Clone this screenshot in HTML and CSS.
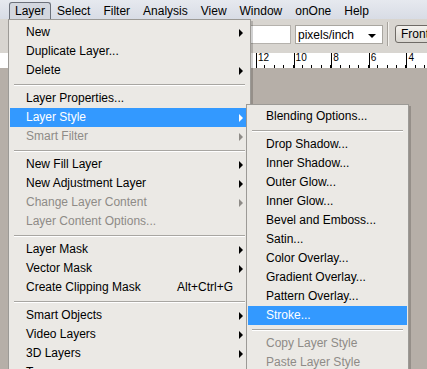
FILE: index.html
```html
<!DOCTYPE html>
<html>
<head>
<meta charset="utf-8">
<link rel="stylesheet" href="styles.css">
</head>
<body>
<div class="app">
  <div class="menubar">
    <span class="mi active">Layer</span>
    <span class="mi">Select</span>
    <span class="mi">Filter</span>
    <span class="mi">Analysis</span>
    <span class="mi">View</span>
    <span class="mi">Window</span>
    <span class="mi">onOne</span>
    <span class="mi">Help</span>
  </div>
  <div class="toolbar">
    <div class="field"></div>
    <div class="select">pixels/inch<span class="caret"></span></div>
    <div class="vsep"></div>
    <div class="btn">Front Image</div>
  </div>
  <div class="ruler">
    <span class="tick">12</span><span class="tick">10</span><span class="tick">8</span><span class="tick">6</span><span class="tick">4</span>
  </div>
  <div class="canvas"></div>

  <div class="menu">
    <div class="item sub">New</div>
    <div class="item">Duplicate Layer...</div>
    <div class="item sub">Delete</div>
    <div class="sep"></div>
    <div class="item">Layer Properties...</div>
    <div class="item sub hl">Layer Style</div>
    <div class="item sub dis">Smart Filter</div>
    <div class="sep"></div>
    <div class="item sub">New Fill Layer</div>
    <div class="item sub">New Adjustment Layer</div>
    <div class="item sub dis">Change Layer Content</div>
    <div class="item dis">Layer Content Options...</div>
    <div class="sep"></div>
    <div class="item sub">Layer Mask</div>
    <div class="item sub">Vector Mask</div>
    <div class="item"><span>Create Clipping Mask</span><span class="key">Alt+Ctrl+G</span></div>
    <div class="sep"></div>
    <div class="item sub">Smart Objects</div>
    <div class="item sub">Video Layers</div>
    <div class="item sub">3D Layers</div>
    <div class="item sub">Type</div>
  </div>

  <div class="submenu">
    <div class="item">Blending Options...</div>
    <div class="sep"></div>
    <div class="item">Drop Shadow...</div>
    <div class="item">Inner Shadow...</div>
    <div class="item">Outer Glow...</div>
    <div class="item">Inner Glow...</div>
    <div class="item">Bevel and Emboss...</div>
    <div class="item">Satin...</div>
    <div class="item">Color Overlay...</div>
    <div class="item">Gradient Overlay...</div>
    <div class="item">Pattern Overlay...</div>
    <div class="item hl">Stroke...</div>
    <div class="sep"></div>
    <div class="item dis">Copy Layer Style</div>
    <div class="item dis">Paste Layer Style</div>
  </div>
</div>
</body>
</html>
```

FILE: styles.css
```css
html, body {
  margin: 0;
  padding: 0;
  width: 427px;
  height: 369px;
  overflow: hidden;
}
body {
  font-family: "Liberation Sans", Arial, sans-serif;
  font-size: 12px;
  color: #000;
  background: #b6afa8;
}
.app {
  position: relative;
  width: 427px;
  height: 369px;
  overflow: hidden;
  display: flex;
  flex-direction: column;
}
.menubar {
  height: 19px;
  flex: none;
  display: flex;
  align-items: flex-end;
  padding-left: 9px;
  background: linear-gradient(#e6e9ef, #d8dce5);
  box-sizing: border-box;
}
.mi {
  font-size: 12px;
  padding: 0 5px;
  margin-right: 1px;
  line-height: 16px;
  height: 17px;
  border: 1px solid transparent;
  border-bottom: none;
  box-sizing: border-box;
  flex: none;
}
.mi.active {
  border-color: #6c717b;
  border-radius: 3px 3px 0 0;
  background: #d3d7df;
  margin-right: 0;
}
.toolbar {
  height: 34px;
  flex: none;
  background: #d8d5d0;
  display: flex;
  align-items: center;
  padding: 0 0 4px 8px;
  box-sizing: border-box;
}
.field {
  width: 281px;
  height: 17px;
  background: #fff;
  border: 1px solid #b5b2ad;
  margin-right: 4px;
  flex: none;
}
.select {
  width: 84px;
  height: 17px;
  background: #fff;
  border: 1px solid #a9a6a0;
  font-size: 12px;
  line-height: 18px;
  padding-left: 2px;
  position: relative;
  flex: none;
}
.caret {
  position: absolute;
  right: 6px;
  top: 8px;
  width: 0;
  height: 0;
  border-left: 4px solid transparent;
  border-right: 4px solid transparent;
  border-top: 4px solid #000;
}
.vsep {
  width: 1px;
  height: 24px;
  background: #a6a29c;
  border-right: 1px solid #f4f2ee;
  margin: 0 6px 0 4px;
  flex: none;
}
.btn {
  height: 16px;
  border: 1px solid #6f6b66;
  border-radius: 3px;
  background: linear-gradient(#f4f2ee, #d9d6d0);
  padding: 0 5px;
  line-height: 16px;
  white-space: nowrap;
  flex: none;
}
.ruler {
  height: 15px;
  flex: none;
  display: flex;
  padding-left: 256px;
  font-size: 10px;
  line-height: 10px;
  background-color: #fff;
  background-image: repeating-linear-gradient(90deg, transparent 0 8.4px, #000 8.4px 9.4px);
  background-size: 100% 3px;
  background-position: 256px bottom;
  background-repeat: no-repeat;
}
.tick {
  width: 37.6px;
  flex: none;
  border-left: 1px solid #000;
  padding-left: 1px;
  box-sizing: border-box;
  height: 15px;
}
.canvas {
  flex: 1;
  background: #b6afa8;
}
.menu {
  position: absolute;
  left: 8px;
  top: 19px;
  width: 243px;
  background: #ebe9e5;
  border: 1px solid #9c9a96;
  box-sizing: border-box;
  padding: 3px 1px 0 1px;
  box-shadow: 2px 2px 0 rgba(0,0,0,0.18);
}
.submenu {
  position: absolute;
  left: 246px;
  top: 104px;
  width: 163px;
  background: #ebe9e5;
  border: 1px solid #9c9a96;
  box-sizing: border-box;
  padding: 2px 1px 3px 1px;
  box-shadow: 2px 2px 0 rgba(0,0,0,0.18);
}
.item {
  height: 19px;
  line-height: 19px;
  padding-left: 16px;
  padding-right: 16px;
  position: relative;
  display: flex;
  justify-content: space-between;
  font-size: 12px;
  white-space: nowrap;
}
.submenu .item { padding-left: 18px; }
.item.dis { color: #8e8b87; }
.item.hl { background: #3399ff; color: #fff; }
.item.sub::after {
  content: "";
  position: absolute;
  right: 6px;
  top: 6px;
  width: 0;
  height: 0;
  border-top: 4px solid transparent;
  border-bottom: 4px solid transparent;
  border-left: 4px solid #000;
}
.item.sub.dis::after { border-left-color: #8e8b87; }
.item.hl.sub::after { border-left-color: #fff; }
.sep {
  height: 1px;
  background: #a8a6a2;
  border-bottom: 1px solid #fff;
  margin: 4px 4px 3px 4px;
}
```
